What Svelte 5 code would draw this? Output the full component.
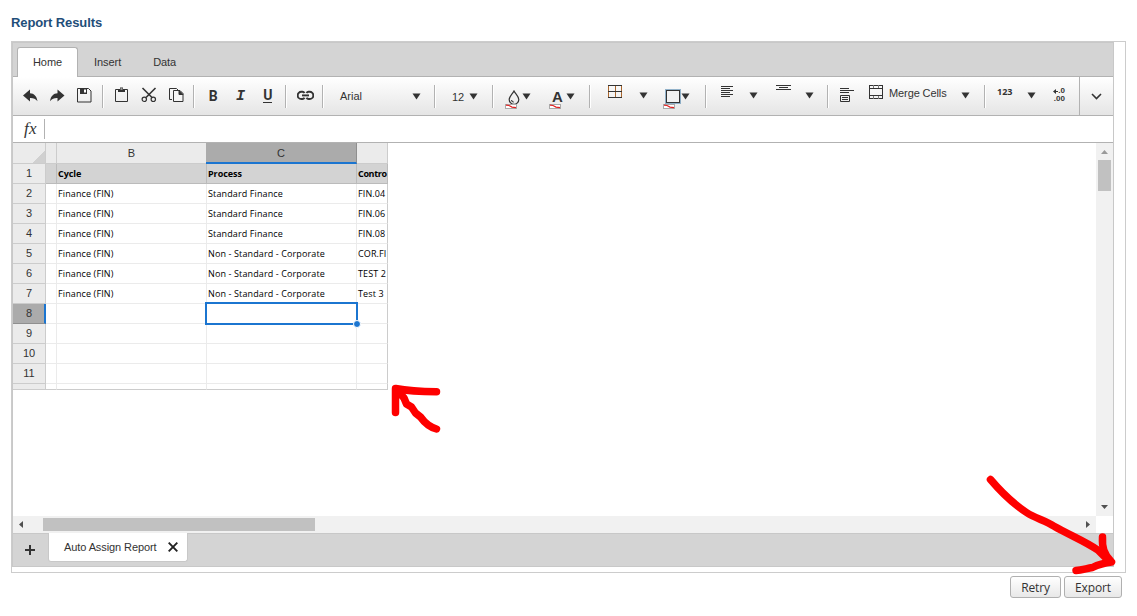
<script>
  const tabs = ['Home', 'Insert', 'Data'];

  const rows = [
    ['Cycle', 'Process', 'Contro'],
    ['Finance (FIN)', 'Standard Finance', 'FIN.04'],
    ['Finance (FIN)', 'Standard Finance', 'FIN.06'],
    ['Finance (FIN)', 'Standard Finance', 'FIN.08'],
    ['Finance (FIN)', 'Non - Standard - Corporate', 'COR.FI'],
    ['Finance (FIN)', 'Non - Standard - Corporate', 'TEST 2'],
    ['Finance (FIN)', 'Non - Standard - Corporate', 'Test 3'],
    ['', '', ''],
    ['', '', ''],
    ['', '', ''],
    ['', '', '']
  ];

  let activeTab = $state('Home');
  let activeRow = $state(8);
</script>

{#snippet caret()}
  <svg class="caret" width="9" height="7"><path d="M0.5 0.5h8l-4 6z" fill="#333" /></svg>
{/snippet}

{#snippet swatch()}
  <svg class="swatch" width="12" height="5">
    <rect x="0.5" y="0.5" width="11" height="4" fill="#fff" stroke="#aaa" />
    <path d="M1 1.2l3 .3 3 1.6 4 .5" fill="none" stroke="#e02020" stroke-width="1.2" />
  </svg>
{/snippet}

<h1>Report Results</h1>

<div class="frame">
  <div class="sheet">
    <nav class="tabs">
      {#each tabs as tab}
        <button class="tab" class:active={tab === activeTab} onclick={() => (activeTab = tab)}>{tab}</button>
      {/each}
    </nav>

    <div class="toolbar">
      <div class="group">
        <button class="tool" aria-label="Undo">
          <svg width="16" height="14"><path d="M0 6.500L7 .5v3.700c4 .2 6.800 2.800 7.500 8-2-2.600-4.200-3.300-7.500-3.200v3.500z" fill="#333" /></svg>
        </button>
        <button class="tool" aria-label="Redo">
          <svg width="16" height="14"><path d="M14.500 6.500L7.500 .5v3.700C3.500 4.400 .7 7 0 12.200c2-2.600 4.200-3.300 7.500-3.200v3.500z" fill="#333" /></svg>
        </button>
        <button class="tool" aria-label="Save">
          <svg width="15" height="15" fill="none" stroke="#333"><path d="M.5 .5h11l2.500 2.500v11H.5z" /><path d="M3 1h7v5H3z" fill="#333" stroke="none" /><path d="M7 1.500h2v3h-2z" fill="#fff" stroke="none" /></svg>
        </button>
      </div>
      <div class="group">
        <button class="tool paste" aria-label="Paste">
          <svg width="13" height="16" fill="none" stroke="#333"><path d="M3 2.500H.5v12h12v-12H10" /><path d="M3 5V2h2V.5h3V2h2v3z" fill="#333" stroke="none" /><path d="M5.500 1.500h2v1h-2z" fill="#f5f5f5" stroke="none" /></svg>
        </button>
        <button class="tool cut" aria-label="Cut">
          <svg width="16" height="16" fill="none" stroke="#333"><path d="M14.500 1L5 10.500" stroke-width="1.600" /><path d="M1.500 1l9.500 9.500" stroke-width="1.600" /><circle cx="3.300" cy="12.300" r="2.200" stroke-width="1.200" /><circle cx="12.300" cy="12.300" r="2.200" stroke-width="1.200" /></svg>
        </button>
        <button class="tool copy" aria-label="Copy">
          <svg width="15" height="16" fill="none" stroke="#333"><path d="M3 12.500H.5V1.500h7l2 2" /><path d="M4.500 3.500h6.500l3 3v8H4.500z" fill="#f5f5f5" /><path d="M10 3.500v4h4z" fill="#333" /></svg>
        </button>
      </div>
      <div class="group">
        <button class="tool glyph bold">B</button>
        <button class="tool glyph italic">I</button>
        <button class="tool glyph underline"><span>U</span></button>
      </div>
      <div class="group">
        <button class="tool link" aria-label="Link">
          <svg width="17" height="11" fill="none" stroke="#333" stroke-width="1.900"><path d="M7.500 3A2.600 2.600 0 0 0 5.500 1.800H4.300a3.200 3.200 0 0 0 0 7.200h1.200A2.600 2.600 0 0 0 7.500 7.800" /><path d="M9.500 3a2.600 2.600 0 0 1 2-1.200h1.200a3.200 3.200 0 0 1 0 7.200h-1.200a2.600 2.600 0 0 1-2-1.200" /><path d="M5 5.400h7" /></svg>
        </button>
      </div>
      <div class="group font">
        <span>Arial</span>
        {@render caret()}
      </div>
      <div class="group size">
        <span>12</span>
        {@render caret()}
      </div>
      <div class="group colors">
        <div class="color">
          <svg class="drop" width="12" height="15" fill="none" stroke="#333" stroke-width="1.200"><path d="M6 1C4.500 4 1.200 6.500 1.200 9.500a4.700 4.700 0 0 0 9.600 0C10.800 6.500 7.500 4 6 1z" /><path d="M3.500 10c.2 1.300 1 2 2.200 2.200" /></svg>
          {@render caret()}
          {@render swatch()}
        </div>
        <div class="color">
          <b class="letter">A</b>
          {@render caret()}
          {@render swatch()}
        </div>
      </div>
      <div class="group borders">
        <svg class="cells" width="14" height="13" fill="none"><path d="M.5 0v13M7.500 0v13M13.500 0v13" stroke="#a8662e" /><path d="M0 .5h14M0 6.500h14M0 12.500h14" stroke="#333" /></svg>
        {@render caret()}
        <div class="color">
          <svg class="outline" width="16" height="16" fill="none"><rect x=".5" y=".5" width="15" height="14" stroke="#2f6f9f" stroke-dasharray="1 1" /><rect x="1.500" y="1.500" width="13" height="12" fill="#f2f2f2" stroke="#333" /></svg>
          {@render caret()}
          {@render swatch()}
        </div>
      </div>
      <div class="group align">
        <svg class="lines" width="14" height="12" stroke="#333"><path d="M1 .5h12M1 2.500h9M1 4.500h12M1 6.500h9M1 8.500h12M1 10.500h9" /></svg>
        {@render caret()}
        <svg class="valign" width="15" height="6" stroke="#333"><path d="M0 .5h15M3 2.500h9M0 4.500h15" /></svg>
        {@render caret()}
      </div>
      <div class="group merge">
        <svg class="wrap" width="15" height="15" fill="none" stroke="#333"><path d="M1 .5h9M1 2.500h14M1 4.500h9M1.500 7.500h9v6h-9zM3 9.500h6M3 11.500h6" /></svg>
        <svg class="film" width="14" height="14" fill="none" stroke="#333"><path d="M.5 0v14M13.500 0v14M0 .5h14M0 3.500h14M0 10.500h14M0 13.500h14" /><path d="M4.500 0v3M9.500 0v3M4.500 11v3M9.500 11v3" stroke="#777" /></svg>
        <span>Merge Cells</span>
        {@render caret()}
      </div>
      <div class="group numbers">
        <b class="digits">123</b>
        {@render caret()}
        <div class="decimals">
          <span><svg width="5" height="5"><path d="M0 2.500L3 0v2h2v1H3v2z" fill="#333" /></svg>.0</span>
          <span>.00</span>
        </div>
      </div>
      <button class="more" aria-label="More">
        <svg width="11" height="7" fill="none" stroke="#333" stroke-width="1.600"><path d="M1 1l4.500 4.500L10 1" /></svg>
      </button>
    </div>

    <div class="formula"><i>fx</i></div>

    <div class="body">
      <div class="canvas">
        <div class="grid">
          <div class="corner"></div>
          <div class="col"></div>
          <div class="col">B</div>
          <div class="col selected">C</div>
          <div class="col"></div>
          {#each rows as row, i}
            <div class="row-head" class:selected={i + 1 === activeRow}>{i + 1}</div>
            <div class="cell" class:head={i === 0}></div>
            {#each row as value, j}
              <div class="cell" class:head={i === 0}>
                {value}
                {#if i + 1 === activeRow && j === 1}<div class="cursor"></div>{/if}
              </div>
            {/each}
          {/each}
          <div class="row-head"></div>
          <div class="cell"></div>
          <div class="cell"></div>
          <div class="cell"></div>
          <div class="cell"></div>
        </div>
      </div>
      <div class="vscroll">
        <svg width="7" height="4"><path d="M0 4L3.500 0 7 4z" fill="#9a9a9a" /></svg>
        <div class="thumb"></div>
        <svg width="7" height="4"><path d="M0 0h7L3.500 4z" fill="#505050" /></svg>
      </div>
      <div class="hscroll">
        <svg width="4" height="7"><path d="M4 0v7L0 3.500z" fill="#505050" /></svg>
        <div class="thumb"></div>
        <svg width="4" height="7"><path d="M0 0v7l4-3.500z" fill="#505050" /></svg>
      </div>
    </div>

    <div class="sheets">
      <button class="add" aria-label="Add sheet">
        <svg width="10" height="10" stroke="#333" stroke-width="2"><path d="M5 0v10M0 5h10" /></svg>
      </button>
      <div class="sheet-tab">
        <span>Auto Assign Report</span>
        <svg width="10" height="10" stroke="#222" stroke-width="1.900"><path d="M.7 .7l8.600 8.600M9.300 .7L.7 9.300" /></svg>
      </div>
    </div>
  </div>
</div>

<div class="actions">
  <button class="retry">Retry</button>
  <button class="export">Export</button>
</div>

<!-- Hand-drawn pointers over the page -->
<svg class="marks" width="1137" height="616" fill="none" stroke="#fe0000" stroke-width="7.500" stroke-linecap="round" stroke-linejoin="round">
  <path d="M395.500 412.500v-24c10 2 22 3.200 41 3.200" />
  <path d="M397 390l7 8 2.500 6 5 3 4 6 5 4c5 7 9 10 16 12" />
  <path d="M990.500 479.500c11 13 24 25 36 33 9 6 19 8 28 14 16 9 31 15 44 24l11 11" />
  <path d="M1102.500 537c-.5 10 1 17 9 25-8 1-14 3-19 5.500-6 1-11 2.500-16.500 3" />
</svg>

<style>
  :global(body) {
    background: #fff;
    font-family: 'Liberation Sans', Arial, sans-serif;
    font-size: 11px;
    color: #333;
    overflow: hidden;
  }

  h1 {
    margin: 0;
    padding: 15px 0 0 11px;
    height: 26px;
    font-size: 13px;
    line-height: 15px;
    letter-spacing: -0.1px;
    color: #1f4e79;
  }

  button {
    font: inherit;
    color: inherit;
    margin: 0;
    padding: 0;
    border: 0;
    background: none;
  }

  svg {
    display: block;
    flex: none;
  }

  .frame {
    box-sizing: border-box;
    width: 1115px;
    height: 532px;
    margin-left: 11px;
    border: 1px solid #ccc;
  }

  .sheet {
    box-sizing: border-box;
    display: flex;
    flex-direction: column;
    width: 1102px;
    height: 525px;
    border: 1px solid #c8c8c8;
  }

  .tabs {
    box-sizing: border-box;
    display: flex;
    height: 34px;
    padding: 4px 0 0 4px;
    background: #d4d4d4;
    border-bottom: 1px solid #b2b2b2;
  }

  .tab {
    box-sizing: border-box;
    height: 30px;
    padding: 0 15px 2px;
    border: 1px solid transparent;
    border-bottom: 0;
    letter-spacing: -0.07px;
  }

  .tab.active {
    background: #fff;
    border-color: #b2b2b2;
    border-radius: 3px 3px 0 0;
  }

  .toolbar {
    box-sizing: border-box;
    display: flex;
    height: 39px;
    padding-left: 4px;
    background: linear-gradient(#fff, #e5e5e5);
    border-bottom: 1px solid #b2b2b2;
  }

  .group {
    position: relative;
    display: flex;
    height: 38px;
    padding-right: 4px;
    margin-right: 6px;
  }

  .group::after {
    content: '';
    position: absolute;
    top: 8px;
    right: -2px;
    width: 1px;
    height: 23px;
    background: #b2b2b2;
    border-right: 1px solid #fff;
  }

  .group.numbers::after {
    display: none;
  }

  .tool {
    box-sizing: border-box;
    display: flex;
    align-items: center;
    justify-content: center;
    width: 27px;
    height: 37px;
  }

  .paste,
  .cut {
    padding-bottom: 2px;
  }

  .copy {
    padding: 0 0 2px 2px;
  }

  .link {
    padding-left: 2px;
  }

  .glyph {
    width: 27.33px;
    padding-left: 1px;
    font-size: 14px;
    font-weight: bold;
    font-family: Roboto, sans-serif;
  }

  .italic {
    font-family: 'Liberation Mono', monospace;
    font-style: italic;
    font-size: 15px;
    padding-top: 2px;
  }

  .underline span {
    border-bottom: 1px solid #333;
    line-height: 13px;
  }

  .font {
    box-sizing: border-box;
    width: 106px;
    padding: 0 13px 0 12px;
    align-items: center;
    justify-content: space-between;
  }

  .size {
    box-sizing: border-box;
    width: 52px;
    padding: 1px 14px 0 12px;
    align-items: center;
    justify-content: space-between;
  }

  .colors {
    box-sizing: border-box;
    width: 91px;
    padding-left: 7px;
    gap: 18px;
  }

  .color {
    display: grid;
    grid-template-columns: 17px 9px;
    grid-template-rows: 14px 5px;
    width: 26px;
    padding-top: 13px;
  }

  .color .caret {
    margin-top: 3px;
  }

  .color .swatch {
    grid-row: 2;
    z-index: 1;
  }

  .drop {
    margin-left: 3px;
  }

  .letter {
    font-size: 15px;
    line-height: 13px;
    padding-left: 3px;
  }

  .borders {
    box-sizing: border-box;
    width: 110px;
    padding-left: 13px;
  }

  .borders > .cells {
    margin-top: 8px;
  }

  .borders > .caret {
    margin: 15px 15px 0 17px;
  }

  .borders > .color {
    grid-template-columns: 18px 9px;
    grid-template-rows: 15px 5px;
    padding-top: 12px;
  }

  .borders .outline {
    margin-left: 2px;
  }

  .borders .color .caret {
    margin-top: 4px;
  }

  .align {
    box-sizing: border-box;
    width: 116px;
    padding-left: 9px;
  }

  .lines {
    margin-top: 9px;
  }

  .lines + .caret {
    margin: 15px 18px 0 15px;
  }

  .valign {
    margin-top: 8px;
  }

  .valign + .caret {
    margin: 15px 0 0 14px;
  }

  .merge {
    box-sizing: border-box;
    width: 151px;
    padding-left: 6px;
  }

  .wrap {
    margin-top: 11px;
  }

  .film {
    margin: 8px 6px 0 15px;
  }

  .merge span {
    padding-top: 10px;
    width: 58px;
    white-space: nowrap;
    letter-spacing: -0.1px;
  }

  .merge .caret {
    margin: 15px 0 0 14px;
  }

  .numbers {
    box-sizing: border-box;
    width: 89px;
    margin: 0;
    padding-left: 7px;
    line-height: 10px;
    font-size: 9px;
  }

  .digits {
    padding-top: 10px;
    width: 16px;
    font-family: 'Open Sans', sans-serif;
  }

  .numbers .caret {
    margin: 15px 15px 0 14px;
  }

  .decimals {
    display: flex;
    flex-direction: column;
    align-items: flex-end;
    padding-top: 10px;
    width: 14px;
    font-size: 8px;
    line-height: 8px;
    font-weight: bold;
  }

  .decimals span {
    display: flex;
    align-items: center;
    height: 8px;
  }

  .more {
    display: flex;
    align-items: center;
    justify-content: center;
    width: 34px;
    height: 38px;
    border-left: 1px solid #b2b2b2;
  }

  .formula {
    box-sizing: border-box;
    display: flex;
    align-items: center;
    height: 27px;
    border-bottom: 1px solid #b2b2b2;
  }

  .formula i {
    box-sizing: border-box;
    width: 32px;
    height: 20px;
    padding-left: 11px;
    border-right: 1px solid #b2b2b2;
    font-family: 'Liberation Serif', serif;
    font-size: 17px;
    line-height: 19px;
    letter-spacing: 0.4px;
  }

  .body {
    display: grid;
    grid-template-columns: 1083px 17px;
    grid-template-rows: 373px 17px;
    height: 390px;
  }

  .grid {
    display: grid;
    grid-template-columns: 33px 11px 150px 150px 31px;
    grid-template-rows: 21px repeat(11, 20px) 6px;
    width: 375px;
  }

  .corner,
  .col,
  .row-head {
    box-sizing: border-box;
    background: #ebebeb;
    border-right: 1px solid #ccc;
    border-bottom: 1px solid #ccc;
    text-align: center;
    line-height: 20px;
  }

  .row-head {
    line-height: 19px;
  }

  .corner {
    background: linear-gradient(135deg, transparent 50%, #d0d0d0 50%) right bottom / 12px 12px no-repeat #ebebeb;
  }

  .col.selected {
    margin-left: -1px;
    background: #ababab;
    border-right-color: #8f8f8f;
    border-bottom: 2px solid #1b75d0;
  }

  .row-head.selected {
    background: #ababab;
    border-right: 2px solid #1b75d0;
    border-bottom-color: #8f8f8f;
    padding-left: 1px;
  }

  .cell {
    box-sizing: border-box;
    position: relative;
    min-width: 0;
    padding-left: 1px;
    border-right: 1px solid #ebebeb;
    border-bottom: 1px solid #ebebeb;
    font-family: 'Open Sans', sans-serif;
    font-size: 9px;
    line-height: 19px;
    letter-spacing: 0.12px;
    color: #000;
    white-space: nowrap;
  }

  .cell:nth-child(5n) {
    border-right-color: #ccc;
  }

  .cell:nth-last-child(-n + 4),
  .row-head:nth-last-child(5) {
    border-bottom-color: #ccc;
  }

  .cell.head {
    background: #d3d3d3;
    border-color: #bbb;
    font-weight: bold;
    letter-spacing: -0.05px;
  }

  .cell.head:nth-child(5n) {
    letter-spacing: -0.35px;
  }

  .cursor {
    position: absolute;
    top: -2px;
    left: -2px;
    width: 149px;
    height: 19px;
    border: 2px solid #1b75d0;
    z-index: 2;
  }

  .cursor::after {
    content: '';
    position: absolute;
    right: -5px;
    bottom: -5px;
    width: 6px;
    height: 6px;
    border: 1px solid #fff;
    border-radius: 50%;
    background: #1b75d0;
  }

  .vscroll {
    display: flex;
    flex-direction: column;
    align-items: center;
    box-sizing: border-box;
    padding: 7px 0;
    background: #f1f1f1;
  }

  .vscroll .thumb {
    width: 13px;
    height: 31px;
    margin: 6px 0 auto;
    background: #c1c1c1;
  }

  .hscroll {
    display: flex;
    align-items: center;
    background: #f1f1f1;
    padding: 0 6px;
  }

  .hscroll .thumb {
    width: 272px;
    height: 13px;
    margin: 0 auto 0 20px;
    background: #c1c1c1;
  }

  .sheets {
    box-sizing: border-box;
    display: flex;
    height: 33px;
    background: #d4d4d4;
    border-top: 1px solid #c8c8c8;
  }

  .add {
    box-sizing: border-box;
    display: flex;
    align-items: center;
    justify-content: center;
    width: 35px;
    height: 32px;
    padding-right: 1px;
  }

  .sheet-tab {
    box-sizing: border-box;
    display: flex;
    align-items: center;
    gap: 11px;
    width: 140px;
    height: 29px;
    margin-top: -1px;
    padding-left: 15px;
    background: #fff;
    border: 1px solid #c8c8c8;
    border-top: 0;
    border-radius: 0 0 3px 3px;
    letter-spacing: -0.09px;
  }

  .actions {
    display: flex;
    gap: 3px;
    justify-content: flex-end;
    width: 1122px;
    padding-top: 3px;
  }

  .actions button {
    box-sizing: border-box;
    height: 22px;
    padding-top: 1px;
    border: 1px solid #b0b0b0;
    border-radius: 3px;
    background: linear-gradient(#fff, #e8e8e8);
    font-family: 'Open Sans', sans-serif;
    font-size: 12px;
    line-height: 20px;
    letter-spacing: -0.15px;
  }

  .retry {
    width: 51px;
  }

  .export {
    width: 58px;
  }

  .marks {
    position: absolute;
    top: 0;
    left: 0;
    pointer-events: none;
  }
</style>
